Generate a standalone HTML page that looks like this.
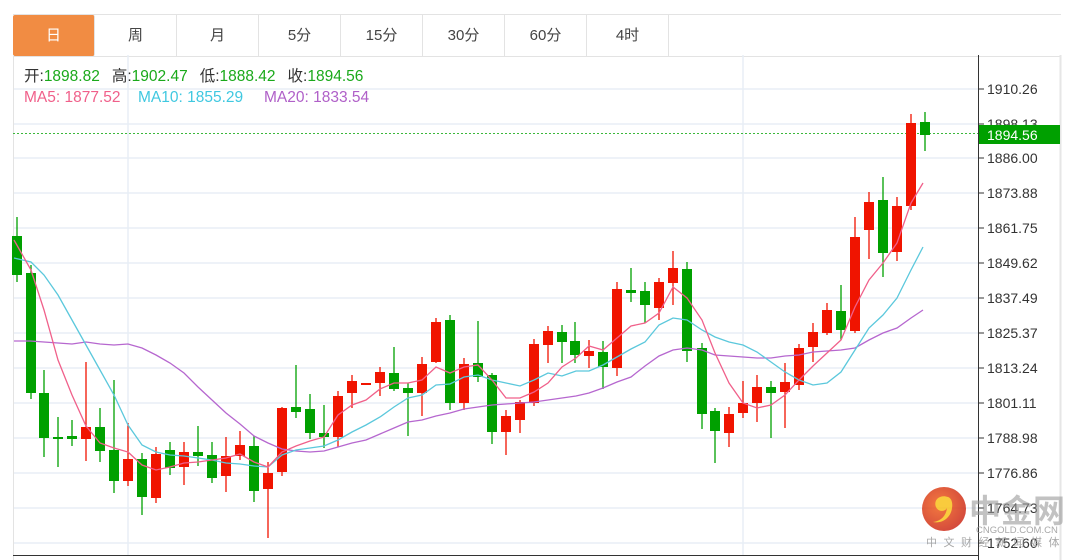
<!DOCTYPE html>
<html><head><meta charset="utf-8"><style>
body{margin:0;width:1080px;height:560px;background:#fff;overflow:hidden;font-family:"Liberation Sans","Noto Sans CJK SC",sans-serif}
.tabs{position:absolute;left:13px;top:14px;height:41px;width:1048px;border-top:1px solid #e3e3e3;border-bottom:1px solid #e3e3e3;display:flex}
.tab{width:81px;border-right:1px solid #e3e3e3;text-align:center;line-height:41px;font-size:15px;color:#444}
.tab.on{background:#f18c43;color:#fff;border-radius:2px}
</style></head><body>
<div class="tabs"><div class="tab on">日</div><div class="tab">周</div><div class="tab">月</div><div class="tab">5分</div><div class="tab">15分</div><div class="tab">30分</div><div class="tab">60分</div><div class="tab">4时</div></div>
<svg width="1080" height="560" style="position:absolute;left:0;top:0" font-family="Liberation Sans, Noto Sans CJK SC, sans-serif">
<line x1="13.5" y1="55" x2="13.5" y2="560" stroke="#e3e3e3"/>
<line x1="1060.5" y1="55" x2="1060.5" y2="560" stroke="#e6e6e6" stroke-width="2"/>
<g stroke="#e8eef5" stroke-width="1.5">
<line x1="14" y1="89" x2="978" y2="89"/><line x1="14" y1="124" x2="978" y2="124"/><line x1="14" y1="158" x2="978" y2="158"/><line x1="14" y1="193" x2="978" y2="193"/><line x1="14" y1="228" x2="978" y2="228"/><line x1="14" y1="263" x2="978" y2="263"/><line x1="14" y1="298" x2="978" y2="298"/><line x1="14" y1="333" x2="978" y2="333"/><line x1="14" y1="368" x2="978" y2="368"/><line x1="14" y1="403" x2="978" y2="403"/><line x1="14" y1="438" x2="978" y2="438"/><line x1="14" y1="473" x2="978" y2="473"/><line x1="14" y1="508" x2="978" y2="508"/><line x1="14" y1="543" x2="978" y2="543"/>
<line x1="128" y1="55" x2="128" y2="555"/><line x1="743" y1="55" x2="743" y2="555"/>
</g>
<line x1="978.5" y1="55" x2="978.5" y2="560" stroke="#333"/>
<line x1="13" y1="555.5" x2="978" y2="555.5" stroke="#333"/>
<g font-size="14" fill="#333">
<g stroke="#333"><line x1="979" y1="89" x2="984" y2="89"/><line x1="979" y1="124" x2="984" y2="124"/><line x1="979" y1="158" x2="984" y2="158"/><line x1="979" y1="193" x2="984" y2="193"/><line x1="979" y1="228" x2="984" y2="228"/><line x1="979" y1="263" x2="984" y2="263"/><line x1="979" y1="298" x2="984" y2="298"/><line x1="979" y1="333" x2="984" y2="333"/><line x1="979" y1="368" x2="984" y2="368"/><line x1="979" y1="403" x2="984" y2="403"/><line x1="979" y1="438" x2="984" y2="438"/><line x1="979" y1="473" x2="984" y2="473"/><line x1="979" y1="508" x2="984" y2="508"/><line x1="979" y1="543" x2="984" y2="543"/></g>
<text x="987" y="94">1910.26</text><text x="987" y="129">1898.13</text><text x="987" y="163">1886.00</text><text x="987" y="198">1873.88</text><text x="987" y="233">1861.75</text><text x="987" y="268">1849.62</text><text x="987" y="303">1837.49</text><text x="987" y="338">1825.37</text><text x="987" y="373">1813.24</text><text x="987" y="408">1801.11</text><text x="987" y="443">1788.98</text><text x="987" y="478">1776.86</text><text x="987" y="513">1764.73</text><text x="987" y="548">1752.60</text>
</g>
<line x1="13" y1="133.5" x2="978" y2="133.5" stroke="#3cb83c" stroke-dasharray="2,2"/>
<rect x="979" y="125" width="81" height="19" fill="#00a000"/>
<text x="987" y="140" font-size="14" fill="#fff">1894.56</text>
<g id="c"></g>
<polyline fill="none" stroke="#b667cf" stroke-width="1.3" points="14,341 30,341 44,342 58,343 72,344 86,342 100,344 114,345 128,344 142,348 156,355 170,363 184,373 198,387 212,400 226,413 240,424 254,436 268,443 282,449 296,451 310,452 324,451 338,447 352,443 366,440 380,434 394,428 408,422 422,420 436,416 450,413 464,409 478,407 492,405 506,404 520,403 534,402 548,400 562,398 576,396 589,393 603,388 617,382 631,377 645,366 659,356 673,350 687,348 702,350 715,355 729,356 743,357 757,358 771,358 785,356 799,355 813,352 827,351 841,350 855,348 869,340 883,333 897,328 911,318 923,310"/>
<polyline fill="none" stroke="#5bc8dc" stroke-width="1.3" points="14,258 31,262 44,275 58,295 72,320 86,345 100,370 114,395 128,425 142,445 156,452 170,455 184,456 198,458 212,460 226,463 240,464 254,466 268,467 282,455 296,450 310,448 324,446 338,440 352,432 366,425 380,417 394,407 408,398 422,395 436,385 450,384 464,377 478,375 492,380 506,383 520,386 534,380 548,373 562,376 576,371 589,371 603,365 617,357 631,349 645,342 659,325 673,318 687,320 702,330 715,337 729,342 743,345 757,352 771,362 785,372 799,380 813,385 827,383 841,372 855,350 869,328 883,315 897,298 911,270 923,247"/>
<polyline fill="none" stroke="#f0608a" stroke-width="1.3" points="14,240 31,270 44,310 58,360 72,395 86,426 100,443 114,448 128,452 142,465 156,470 170,467 184,463 198,462 212,460 226,458 240,454 254,462 268,467 282,452 296,446 310,441 324,437 338,415 352,405 366,400 380,389 394,383 408,383 422,380 436,367 450,373 464,367 478,365 492,380 506,398 520,398 534,392 548,383 562,367 576,358 589,346 603,350 617,338 631,326 645,323 659,313 673,287 687,298 702,320 715,353 729,383 743,403 757,408 771,405 785,395 799,380 813,366 827,353 841,340 855,307 869,280 883,263 897,243 911,203 923,183"/>
<g font-size="15.5"><text x="24" y="81" fill="#333">开:<tspan fill="#1aa91a">1898.82</tspan><tspan dx="12">高:</tspan><tspan fill="#1aa91a">1902.47</tspan><tspan dx="12">低:</tspan><tspan fill="#1aa91a">1888.42</tspan><tspan dx="12">收:</tspan><tspan fill="#1aa91a">1894.56</tspan></text>
<text x="24" y="102" fill="#f0608a">MA5: 1877.52</text><text x="138" y="102" fill="#40c8e0">MA10: 1855.29</text><text x="264" y="102" fill="#b060c8">MA20: 1833.54</text></g>
<g opacity="0.85">
<defs><radialGradient id="g" cx="0.4" cy="0.4" r="0.7"><stop offset="0" stop-color="#f2631e"/><stop offset="1" stop-color="#c9251a"/></radialGradient></defs>
<circle cx="944" cy="509" r="22" fill="url(#g)"/>
<path d="M948 497 c-8 -3 -15 3 -12 10 c2 5 9 5 11 1 c-1 8 -6 13 -14 14 c10 2 18 -5 19 -14 c1 -6 -1 -10 -4 -11z" fill="#f8c21c"/>
<text x="969" y="522" font-size="32" font-weight="bold" fill="#9a9a9a" opacity="0.7">中金网</text>
<text x="976" y="533" font-size="9.5" fill="#999">CNGOLD.COM.CN</text>
<text x="926" y="546" font-size="11" fill="#999" letter-spacing="6.5">中文财经新闻媒体</text>
</g>
</svg>
<script>
const d=[[17,'G',236,275,217,282],[31,'G',273,393,265,399],[44,'G',393,438,370,457],[58,'G',437,439,417,467],[72,'G',436,439,420,446],[86,'R',427,439,362,461],[100,'G',427,451,408,462],[114,'G',450,481,380,493],[128,'R',459,481,423,486],[142,'G',459,497,453,515],[156,'R',454,498,447,503],[170,'G',450,468,442,475],[184,'R',452,467,442,485],[198,'G',452,456,426,466],[212,'G',455,478,442,483],[226,'R',456,476,437,492],[240,'R',445,456,431,460],[254,'G',446,491,436,502],[268,'R',473,489,462,538],[282,'R',408,472,407,476],[296,'G',407,412,365,418],[310,'G',409,433,394,439],[324,'G',433,437,405,448],[338,'R',396,437,391,447],[352,'R',381,393,375,408],[366,'R',383,385,383,385],[380,'R',372,383,367,396],[394,'G',373,389,347,391],[408,'G',388,393,383,436],[422,'R',364,393,357,416],[436,'R',322,362,318,363],[450,'G',320,403,315,410],[464,'R',364,403,358,410],[478,'G',363,377,321,382],[492,'G',375,432,373,444],[506,'R',416,432,410,455],[520,'R',402,420,400,433],[534,'R',344,403,339,406],[548,'R',331,345,326,363],[562,'G',332,342,325,363],[575,'G',341,355,322,363],[589,'R',351,356,340,368],[603,'G',352,367,341,389],[617,'R',289,368,282,376],[631,'G',290,293,268,302],[645,'G',291,305,282,323],[659,'R',282,308,278,320],[673,'R',268,283,251,305],[687,'G',269,351,262,362],[702,'G',348,414,343,429],[715,'G',411,431,408,463],[729,'R',414,433,407,447],[743,'R',403,413,381,418],[757,'R',387,403,375,422],[771,'G',387,393,381,438],[785,'R',382,392,363,428],[799,'R',348,385,344,390],[813,'R',332,347,323,362],[827,'R',310,333,303,335],[841,'G',311,330,285,340],[855,'R',237,331,217,333],[869,'R',202,230,192,259],[883,'G',200,253,177,277],[897,'R',206,252,197,261],[911,'R',123,206,114,210],[925,'G',122,135,112,151]];
let s='';for(const[x,c,a,b,t,u]of d){const f=c=='G'?'#00a000':'#f01400';s+=`<line x1="${x}" y1="${t}" x2="${x}" y2="${u}" stroke="${f}" stroke-width="1.3"/><rect x="${x-5}" y="${a}" width="10" height="${Math.max(b-a,2)}" fill="${f}"/>`;}
document.getElementById('c').innerHTML=s;
</script>
</body></html>
